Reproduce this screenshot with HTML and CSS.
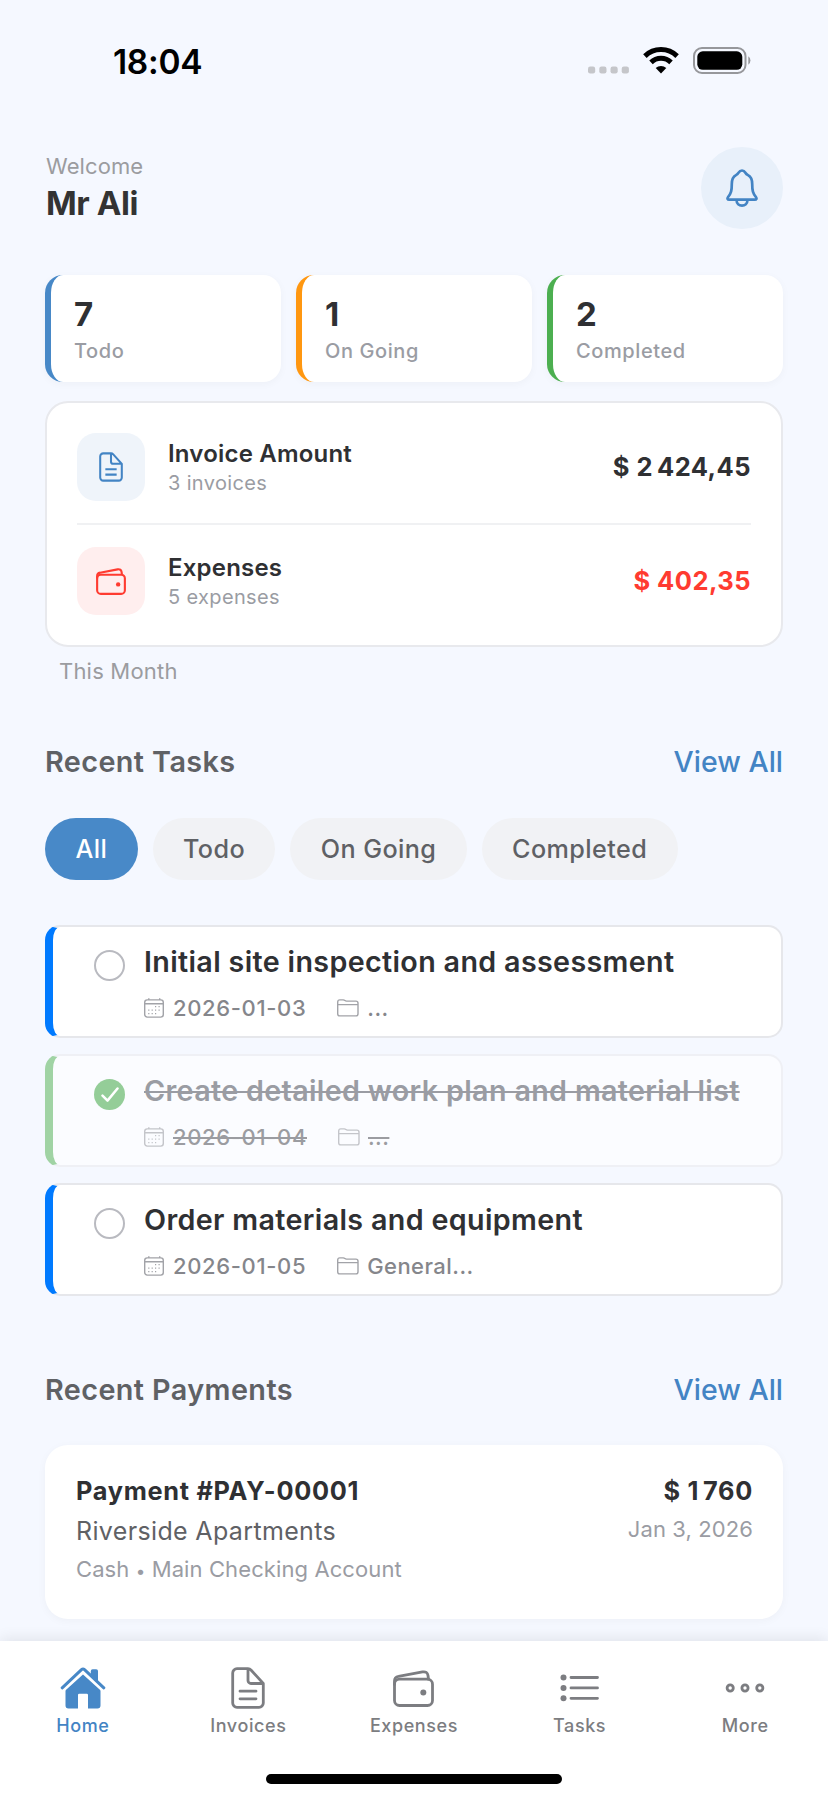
FILE: index.html
```html
<!DOCTYPE html>
<html lang="en">
<head>
<meta charset="utf-8">
<title>Home</title>
<link rel="stylesheet" href="styles.css">
</head>
<body>
<svg class="defs" width="0" height="0">
  <symbol id="doc" viewBox="0 0 34 42"><path d="M17 1.700H6A4.300 4.300 0 0 0 1.700 6v30A4.300 4.300 0 0 0 6 40.300h22a4.300 4.300 0 0 0 4.300-4.300V16.500L20.200 3.200Q18.800 1.700 17 1.700v11.800a3 3 0 0 0 3 3h12.200M9 24.200h16M9 31.800h16"/></symbol>
  <symbol id="wallet" viewBox="0 0 41 37"><rect x="1.500" y="9.200" width="38" height="26.300" rx="5"/><path d="M1.500 14.500v-3.500q0-4 4-4.600L29.500 1.900q4.800-.8 5.500 3.600l.5 3.700"/><circle class="dot" cx="30.300" cy="22.500" r="3"/></symbol>
  <symbol id="calendar" viewBox="0 0 20 20"><rect x=".7" y="1.900" width="18.600" height="17.200" rx="2.500"/><path d="M.7 5.700h18.600M4.800.2v1.700M15.700.2v1.700"/><path class="dots" d="M11 8.600h1.200M14.500 8.600h1.200M4.200 12.200h1.200M7.600 12.200h1.200M11 12.200h1.200M14.500 12.200h1.200M4.200 15.700h1.200M7.600 15.700h1.200M11 15.700h1.200"/></symbol>
  <symbol id="folder" viewBox="0 0 22 18"><path d="M.7 5.600V3Q.7.900 2.800.9h3.400q1 0 1.700.6t1.700.600h9.300q2.100 0 2.100 2.100v10.500q0 2.200-2.200 2.200H2.900Q.7 16.900.7 14.700V5.600h20.300"/></symbol>
</svg>
<header class="status">
  <span class="time">18:04</span>
  <span class="status-icons">
    <svg class="signal" width="42" height="8" viewBox="0 0 42 8"><rect y=".5" width="7.200" height="7" rx="2.200"/><rect x="11.300" y=".5" width="7.200" height="7" rx="2.200"/><rect x="22.500" y=".5" width="7.200" height="7" rx="2.200"/><rect x="33.700" y=".5" width="7.200" height="7" rx="2.200"/></svg>
    <svg class="wifi" width="36" height="27" viewBox="0 0 36 27"><path d="M1.900 9.100a23.200 23.200 0 0 1 32.200 0M8 15.400a14.300 14.300 0 0 1 20 0" fill="none" stroke="#000" stroke-width="5"/><path d="M18 26.500l5.300-5.500a8 8 0 0 0-10.600 0z"/></svg>
    <svg class="battery" width="59" height="27" viewBox="0 0 59 27"><rect x="1" y="1" width="51.500" height="25" rx="8" fill="none" stroke="#96979b" stroke-width="2"/><rect x="4.300" y="4.300" width="45" height="18.500" rx="5.500"/><path d="M55.300 9.300a5.200 5.200 0 0 1 0 8.400z" fill="#96979b"/></svg>
  </span>
</header>
<main class="content">
  <div class="welcome">
    <div><p class="hello">Welcome</p><h1 class="name">Mr Ali</h1></div>
    <button class="bell" aria-label="Notifications"><svg width="32" height="38" viewBox="0 0 32 38"><path d="M16 1.500c-1.500 0-2.600.8-3.400 2.200-.7 1.200-1.400 1.800-2.600 2.400C6.800 7.700 5.800 11 5.800 15c0 6.800-.7 9-3.700 13-1.100 1.500-.6 2.600 1.100 2.600h25.600c1.700 0 2.200-1.100 1.100-2.600-3-4-3.700-6.200-3.700-13 0-4-1-7.300-4.200-8.900-1.200-.6-1.900-1.200-2.600-2.400-.8-1.400-1.900-2.200-3.400-2.200zM10.500 30.800c0 7.800 11 7.800 11 0"/></svg></button>
  </div>
  <section class="stats">
    <div class="stat blue"><b>7</b><span>Todo</span></div>
    <div class="stat orange"><b>1</b><span>On Going</span></div>
    <div class="stat green"><b>2</b><span>Completed</span></div>
  </section>
  <section class="money">
    <div class="money-row">
      <span class="tile tile-blue"><svg width="24" height="30"><use href="#doc"/></svg></span>
      <div class="money-text"><h3>Invoice Amount</h3><p>3 invoices</p></div>
      <strong class="amount">$ 2<i></i>424,45</strong>
    </div>
    <hr>
    <div class="money-row">
      <span class="tile tile-red"><svg width="30" height="27"><use href="#wallet"/></svg></span>
      <div class="money-text"><h3>Expenses</h3><p>5 expenses</p></div>
      <strong class="amount red">$ 402,35</strong>
    </div>
  </section>
  <p class="month">This Month</p>
  <div class="section-head"><h2>Recent Tasks</h2><a>View All</a></div>
  <nav class="chips"><span class="chip active">All</span><span class="chip">Todo</span><span class="chip">On Going</span><span class="chip">Completed</span></nav>
  <section class="tasks">
    <article class="task">
      <span class="check"></span>
      <div><h3>Initial site inspection and assessment</h3>
      <p class="meta"><svg width="20" height="20"><use href="#calendar"/></svg><span class="date">2026-01-03</span><svg class="folder" width="22" height="18"><use href="#folder"/></svg><span>...</span></p></div>
    </article>
    <article class="task done">
      <span class="check"><svg width="18" height="16" viewBox="0 0 18 16"><path d="M1.500 8.600l5 5L16.500 1.500"/></svg></span>
      <div><h3>Create detailed work plan and material list</h3>
      <p class="meta"><svg width="20" height="20"><use href="#calendar"/></svg><span class="date">2026-01-04</span><svg class="folder" width="22" height="18"><use href="#folder"/></svg><span>...</span></p></div>
    </article>
    <article class="task">
      <span class="check"></span>
      <div><h3>Order materials and equipment</h3>
      <p class="meta"><svg width="20" height="20"><use href="#calendar"/></svg><span class="date">2026-01-05</span><svg class="folder" width="22" height="18"><use href="#folder"/></svg><span>General...</span></p></div>
    </article>
  </section>
  <div class="section-head payments-head"><h2>Recent Payments</h2><a>View All</a></div>
  <article class="payment">
    <div><h3>Payment #PAY-00001</h3><p class="client">Riverside Apartments</p><p class="method">Cash <small>•</small> Main Checking Account</p></div>
    <div class="payment-side"><strong>$ 1<i></i>760</strong><p>Jan 3, 2026</p></div>
  </article>
</main>
<footer class="tabbar">
  <nav class="tabs">
    <a class="tab current"><span class="icon"><svg width="46" height="42" viewBox="0 0 46 42"><path class="solid" d="M5.500 22L23 6.200 40.500 22v16.500q0 3-3 3H28V28q0-1.200-1.200-1.200h-7.600Q18 26.800 18 28v13.500H8.500q-3 0-3-3z"/><path class="gap" d="M3 21.500L21.500 4.700q1.500-1.300 3 0L43 21.500"/><path class="solid" d="M30.800 9V4q0-1.800 1.800-1.800h3.600Q38 2.200 38 4v11.500z"/><path class="roof" d="M2.200 20.800L21.500 2.700q1.500-1.300 3 0l19.300 18.100"/></svg></span>Home</a>
    <a class="tab"><span class="icon"><svg width="34" height="42"><use href="#doc"/></svg></span>Invoices</a>
    <a class="tab"><span class="icon"><svg width="41" height="37"><use href="#wallet"/></svg></span>Expenses</a>
    <a class="tab"><span class="icon"><svg width="39" height="28" viewBox="0 0 39 28"><path d="M11 3.500h26.500M11 13.900h26.500M11 24.300h26.500"/><g class="dot"><circle cx="3.500" cy="3.500" r="3"/><circle cx="3.500" cy="13.900" r="3"/><circle cx="3.500" cy="24.300" r="3"/></g></svg></span>Tasks</a>
    <a class="tab"><span class="icon"><svg width="40" height="10" viewBox="0 0 40 10"><circle cx="5.200" cy="5" r="3.100"/><circle cx="20" cy="5" r="3.100"/><circle cx="34.800" cy="5" r="3.100"/></svg></span>More</a>
  </nav>
  <div class="indicator"></div>
</footer>
</body>
</html>
```
FILE: styles.css
```css
* { box-sizing: border-box; margin: 0; padding: 0; }
body { width: 828px; height: 1799px; display: flex; flex-direction: column; background: #f5f8ff; font-family: Inter, "Liberation Sans", sans-serif; color: #2f3033; overflow: hidden; }
svg { display: block; fill: none; flex: none; }
.defs { position: absolute; }
.status { height: 147px; padding: 42px 76px 0 113px; display: flex; justify-content: space-between; align-items: flex-start; color: #000; flex: none; }
.time { font-size: 33.500px; font-weight: 600; line-height: 40px; letter-spacing: -.3px; }
.status-icons { display: flex; align-items: flex-end; padding-top: 5px; }
.status-icons svg { fill: #000; }
.status-icons .signal { fill: #c5c6ca; }
.wifi { margin-left: 13px; }
.battery { margin-left: 14px; }
.content { padding: 0 45px; }
.welcome { display: flex; justify-content: space-between; height: 82px; }
.hello { margin-top: 4px; font-size: 22px; line-height: 30px; color: #9b9ca0; letter-spacing: .1px; padding-left: 1px; }
.name { font-size: 33px; line-height: 45px; font-weight: 700; letter-spacing: -.4px; color: #333; padding-left: 1px; }
.bell { width: 82px; height: 82px; border: 0; border-radius: 50%; background: #e8f0fa; display: grid; place-items: center; stroke: #4384c4; stroke-width: 2.700; }
.stats { margin-top: 46px; display: grid; grid-template-columns: repeat(3, 1fr); gap: 15px; }
.stat { height: 107px; padding: 19px 0 0 23px; border-left: 6px solid; border-radius: 18px; background: #fff; box-shadow: 0 2px 8px rgba(0,0,0,.035); display: flex; flex-direction: column; }
.stat b { font-size: 33px; line-height: 40px; color: #2f3033; }
.stat span { font-size: 20px; line-height: 34px; font-weight: 500; color: #9a9ca3; letter-spacing: .6px; }
.blue { border-color: #4788c7; }
.orange { border-color: #ff9710; }
.green { border-color: #4caf50; }
.money { margin-top: 19px; padding: 30px; height: 246px; background: #fff; border: 2px solid #e8e9ed; border-radius: 23px; }
.money-row { display: flex; align-items: center; height: 68px; }
.money hr { border: 0; height: 2px; background: #f0f1f3; margin: 22px 0; }
.tile { width: 68px; height: 68px; border-radius: 19px; display: grid; place-items: center; stroke-width: 2.900; }
.tile-blue { background: #eff4fa; stroke: #4384c4; }
.tile-red { background: #ffeeee; stroke: #ff3b30; color: #ff3b30; }
.dot { fill: currentColor; stroke: none; }
.money-text { margin-left: 23px; flex: 1; padding-top: 2px; }
.money-text h3 { font-size: 24px; line-height: 30px; font-weight: 600; letter-spacing: .2px; }
.money-text p { font-size: 20px; line-height: 28px; color: #9a9ca3; letter-spacing: .35px; }
.amount { font-size: 25.500px; font-weight: 700; margin: -2px 0 0; letter-spacing: .45px; }
.amount i, .payment-side i { display: inline-block; width: 4px; }
.red { color: #ff3b30; }
.month { margin: 9px 0 0 14px; font-size: 22px; line-height: 30px; color: #9b9ca0; letter-spacing: .2px; }
.section-head { display: flex; justify-content: space-between; margin-top: 58px; line-height: 36px; font-size: 28.500px; }
.section-head h2 { font-size: 28.800px; font-weight: 600; color: #5f6165; letter-spacing: .4px; }
.section-head a { font-weight: 500; color: #4384c4; }
.chips { display: flex; gap: 15px; margin-top: 38px; }
.chip { height: 62px; padding: 0 30.400px; border-radius: 31px; background: #f1f2f5; color: #5f6165; font-size: 25.200px; font-weight: 500; line-height: 62px; letter-spacing: .4px; }
.chip.active { background: #4889c8; color: #fff; }
.tasks { display: flex; flex-direction: column; gap: 16px; margin-top: 45px; }
.task { display: flex; height: 113px; padding: 17px 0 0 41px; background: #fff; border: 2px solid #e6e7eb; border-left: 8px solid #007aff; border-radius: 15px; }
.check { width: 31px; height: 31px; margin-top: 6px; border: 2px solid #b9bac0; border-radius: 50%; display: grid; place-items: center; margin-right: 19px; flex: none; }
.task h3 { font-size: 28.700px; line-height: 36px; font-weight: 600; white-space: nowrap; letter-spacing: .34px; }
.meta { display: flex; align-items: center; height: 30px; margin-top: 13px; font-size: 22px; font-weight: 500; color: #85868b; stroke: #a2a3a8; stroke-width: 1.400; line-height: 30px; letter-spacing: .45px; }
.meta span { stroke: none; margin-left: 8px; }
.meta .date { margin-left: 9px; letter-spacing: .65px; }
.dots { stroke-width: 1.300; }
.folder { margin-left: 31px; }
.done { background: #fbfcff; border-color: #eff0f5; border-left-color: #a0d3a4; }
.done h3 { color: #9a9ca3; text-decoration: line-through; text-decoration-thickness: 2px; }
.done .check { background: #94cd98; border: 0; stroke: #fff; stroke-width: 2.500; stroke-linecap: round; stroke-linejoin: round; }
.done .meta { color: #9b9ca1; stroke: #c4c5ca; }
.done .meta span { text-decoration: line-through; }
.payments-head { margin-top: 76px; }
.payment { margin-top: 37px; height: 174px; padding: 28px 30px 0 31px; background: #fff; border-radius: 23px; box-shadow: 0 2px 10px rgba(0,0,0,.035); display: flex; justify-content: space-between; }
.payment h3, .payment strong { display: block; font-size: 25.300px; line-height: 36px; margin-bottom: 1px; font-weight: 700; letter-spacing: .72px; }
.client { font-size: 25px; line-height: 42px; color: #5f6165; letter-spacing: .35px; }
.method { font-size: 22px; line-height: 34px; color: #9a9ca3; letter-spacing: .1px; }
.method small { font-size: 17px; line-height: 1; }
.payment-side { text-align: right; }
.payment-side p { font-size: 22px; line-height: 38px; color: #9a9ca3; letter-spacing: .1px; }
.tabbar { height: 158px; margin-top: auto; background: #fff; box-shadow: 0 -2px 14px rgba(0,0,0,.09); display: flex; flex-direction: column; align-items: center; flex: none; z-index: 1; }
.tabs { display: grid; grid-template-columns: repeat(5, 1fr); width: 828px; height: 133px; padding-top: 25px; }
.tab { display: flex; flex-direction: column; align-items: center; font-size: 18px; line-height: 32px; font-weight: 500; color: #7c7d81; stroke: #7c7d81; stroke-width: 2.800; stroke-linecap: round; stroke-linejoin: round; letter-spacing: .6px; }
.icon { height: 44px; display: grid; place-items: center; }
.current { color: #4384c4; stroke: #4788c7; }
.solid { fill: #4788c7; stroke: none; }
.gap { stroke: #fff; stroke-width: 6; }
.roof { stroke-width: 3; }
.indicator { width: 296px; height: 10px; border-radius: 5px; background: #000; }
```
